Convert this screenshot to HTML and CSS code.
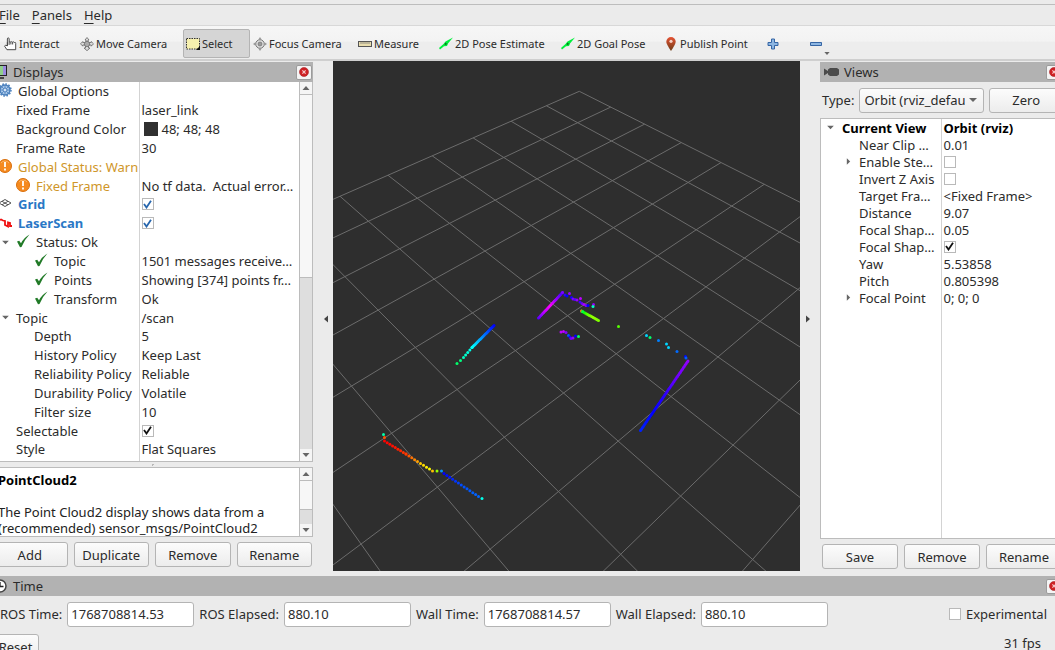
FILE: index.html
```html
<!DOCTYPE html>
<html lang="en">
<head>
<meta charset="utf-8">
<title>RViz</title>
<link rel="stylesheet" href="styles.css">
</head>
<body>
<svg class="defs" aria-hidden="true">
  <symbol id="check" viewBox="0 0 14 14"><path d="M1 7.500 3.200 6.800 5 9.300Q8 3.500 13.500.5 8.500 5.500 5.500 13L4 13.200Z" fill="#217a27"/></symbol>
  <symbol id="warn" viewBox="0 0 14 14"><circle cx="7" cy="7" r="6.500" fill="#f58a1f" stroke="#d96f0c"/><path d="M3 4a5 5 0 0 1 8 0" stroke="#fbb568" fill="none"/><path d="M7 3v5M7 9.500v2" stroke="#fff" stroke-width="1.800"/></symbol>
  <symbol id="close" viewBox="0 0 10 10"><circle cx="5" cy="5" r="4.500" fill="#cf2024" stroke="#a8282b" stroke-width=".6"/><path d="m3.400 3.400 3.200 3.200m0-3.200L3.400 6.600" stroke="#f6cccc" stroke-width="1.200"/></symbol>
  <symbol id="pose" viewBox="0 0 14 14"><path d="M0 11 4.500 7 6.500 4.500 14 .5 9 6.500 8 9 5 9.300 1 12.500Z" fill="#00f03c"/><path d="m6 5.500 2.500 1.500-2.800 1.200Z" fill="#09751f"/></symbol>
  <symbol id="down" viewBox="0 0 8 6"><path d="M.5 1h7L4 5Z" fill="#666"/></symbol>
</svg>

<div class="app">
  <nav class="menubar">
    <button type="button"><u>F</u>ile</button>
    <button type="button"><u>P</u>anels</button>
    <button type="button"><u>H</u>elp</button>
  </nav>

  <div class="toolbar" role="toolbar">
    <button type="button"><svg class="i14" viewBox="0 0 14 16"><path d="M4 10V2.200Q4 1 5 1t1 1.200V6Q7 4.500 8 6q1-1.500 2 0 1.500-1 2 .3 1.500-.6 1.500 1V14.500H3.500L.8 10.500q.3-2 3.200-.5V6M6 6v3M8 6v2.500M10 6v2.500" fill="#fff" stroke="#444" stroke-width="1.100"/></svg>Interact</button>
    <button type="button"><svg class="i14" viewBox="0 0 14 14"><path d="m7 .5 2 2.500H8v2.500h3.200v-1l2.300 2.300-2.300 2.400V8H8.500v3H10l-3 2.700L4 11h1.500V8H2.800v1.200L.5 6.800l2.300-2.300v1H6V3H5Z" fill="#ddd" stroke="#666" stroke-width=".8"/><circle cx="7" cy="7" r="2.700" fill="#aaa" stroke="#666" stroke-width=".7"/></svg>Move Camera</button>
    <button type="button" class="active" aria-pressed="true"><svg class="i14" viewBox="0 0 14 14"><rect x=".5" y="1.500" width="13" height="10.500" fill="#f6f0ae" stroke="#333" stroke-dasharray="1.500 1"/><path d="M14 9v4h-4Z" fill="#111"/></svg>Select</button>
    <button type="button"><svg class="i14" viewBox="0 0 14 14"><circle cx="7" cy="7" r="4.300" fill="#ddd" stroke="#777"/><circle cx="7" cy="7" r="2" fill="#999" stroke="#666" stroke-width=".6"/><path d="M7 0 5.300 2.500h3.400ZM7 14l1.700-2.500H5.300ZM0 7l2.500-1.700v3.400ZM14 7l-2.500-1.700v3.400Z" fill="#999"/></svg>Focus Camera</button>
    <button type="button"><svg class="i14" viewBox="0 0 14 14"><rect x=".5" y="4.500" width="13" height="5" fill="#e8dcae" stroke="#555"/><path d="M3 5v2M5 5v2M7 5v2M9 5v2M11 5v2" stroke="#777" stroke-width=".8"/></svg>Measure</button>
    <button type="button"><svg class="i14"><use href="#pose"/></svg>2D Pose Estimate</button>
    <button type="button"><svg class="i14"><use href="#pose"/></svg>2D Goal Pose</button>
    <button type="button"><svg class="pin" viewBox="0 0 10 14"><defs><linearGradient id="pg" x2="0" y2="1"><stop stop-color="#e65334"/><stop offset="1" stop-color="#6b3b17"/></linearGradient></defs><path d="M5 14Q.3 7 .3 4.700a4.700 4.700 0 0 1 9.400 0Q9.700 7 5 14Z" fill="url(#pg)"/><circle cx="5" cy="4.300" r="1.600" fill="#f5d0c5"/></svg>Publish Point</button>
    <button type="button" class="plain" aria-label="Add tool"><svg class="i12" viewBox="0 0 12 12"><path d="M4.500 1h3v3.500H11v3H7.500V11h-3V7.500H1v-3h3.500Z" fill="#8db6e2" stroke="#3565a4"/></svg></button>
    <button type="button" class="plain" aria-label="Remove tool"><svg class="i12" viewBox="0 0 12 12"><path d="M.5 4.500h11v3H.5Z" fill="#8db6e2" stroke="#3565a4"/></svg><svg class="menu-arrow" viewBox="0 0 8 6"><use href="#down"/></svg></button>
  </div>

  <main class="workspace">
    <section class="dock displays">
      <header class="title">
        <svg class="i14" viewBox="0 0 14 14"><rect x=".5" y=".5" width="13" height="10" fill="#8fd08c" stroke="#222"/><path d="M10 1h3v9h-3Z" fill="#9b8ae0"/><path d="M4 13h7" stroke="#222" stroke-width="1.500"/></svg>
        <h2>Displays</h2>
        <button type="button" class="close" aria-label="Close Displays"><svg><use href="#close"/></svg></button>
      </header>
      <div class="pane tree-pane">
        <div class="clip">
        <table class="tree props">
          <colgroup><col class="name-col"><col></colgroup>
          <tr><td class="l0"><svg class="i14" viewBox="0 0 14 14"><circle cx="7" cy="7" r="5" fill="#a9c8ea" stroke="#4b80bd" stroke-width="1.500"/><circle cx="7" cy="7" r="6" fill="none" stroke="#4b80bd" stroke-width="1.500" stroke-dasharray="1.600 1.500"/><path d="M7 2v10M2 7h10M3.500 3.500l7 7M10.500 3.500l-7 7" stroke="#4b80bd" stroke-width=".8"/><circle cx="7" cy="7" r="2" fill="#d5e5f6" stroke="#4b80bd"/></svg>Global Options</td><td></td></tr>
          <tr><td class="l1">Fixed Frame</td><td>laser_link</td></tr>
          <tr><td class="l1">Background Color</td><td><span class="swatch"></span>48; 48; 48</td></tr>
          <tr><td class="l1">Frame Rate</td><td>30</td></tr>
          <tr class="warning"><td class="l0"><svg class="i14"><use href="#warn"/></svg>Global Status: Warn</td><td></td></tr>
          <tr class="warning"><td class="l1"><svg class="i14"><use href="#warn"/></svg>Fixed Frame</td><td>No tf data.&nbsp; Actual error…</td></tr>
          <tr class="display"><td class="l0"><svg class="i14" viewBox="0 0 14 14"><path d="M1 7 7 3.500 13 7l-6 3.500ZM4 5.300l6 3.500M10 5.300 4 8.800" fill="none" stroke="#555"/></svg>Grid</td><td><input type="checkbox" class="blue" aria-label="Grid" checked></td></tr>
          <tr class="display"><td class="l0"><svg class="i14" viewBox="0 0 14 14"><path d="M0 5.500 3 4.500 5 5.500 7 6v4l3 1.500V7.500L12 8v3h2" fill="none" stroke="#f01010" stroke-width="1.800"/></svg>LaserScan</td><td><input type="checkbox" class="blue" aria-label="LaserScan" checked></td></tr>
          <tr><td class="l1 open"><svg class="i14"><use href="#check"/></svg>Status: Ok</td><td></td></tr>
          <tr><td class="l2"><svg class="i14"><use href="#check"/></svg>Topic</td><td>1501 messages receive…</td></tr>
          <tr><td class="l2"><svg class="i14"><use href="#check"/></svg>Points</td><td>Showing [374] points fr…</td></tr>
          <tr><td class="l2"><svg class="i14"><use href="#check"/></svg>Transform</td><td>Ok</td></tr>
          <tr><td class="l1 open">Topic</td><td>/scan</td></tr>
          <tr><td class="l2">Depth</td><td>5</td></tr>
          <tr><td class="l2">History Policy</td><td>Keep Last</td></tr>
          <tr><td class="l2">Reliability Policy</td><td>Reliable</td></tr>
          <tr><td class="l2">Durability Policy</td><td>Volatile</td></tr>
          <tr><td class="l2">Filter size</td><td>10</td></tr>
          <tr><td class="l1">Selectable</td><td><input type="checkbox" aria-label="Selectable" checked></td></tr>
          <tr><td class="l1">Style</td><td>Flat Squares</td></tr>
          <tr><td class="l1">Size (m)</td><td></td></tr>
        </table>
        </div>
        <div class="scrollbar"><svg><use href="#down"/></svg><i class="thumb long"></i><svg><use href="#down"/></svg></div>
      </div>
      <div class="splitter"></div>
      <div class="pane info-pane">
        <div class="clip info"><h3>PointCloud2</h3><p>The Point Cloud2 display shows data from a<br>(recommended) sensor_msgs/PointCloud2</p></div>
        <div class="scrollbar"><svg><use href="#down"/></svg><i class="thumb"></i><svg><use href="#down"/></svg></div>
      </div>
      <div class="buttons">
        <button type="button">Add</button><button type="button">Duplicate</button><button type="button">Remove</button><button type="button">Rename</button>
      </div>
    </section>

    <button type="button" class="collapse left" aria-label="Collapse left panel"><svg viewBox="0 0 6 8"><path d="M5 .5v7L1 4Z" fill="#444"/></svg></button>
    <svg class="scene" id="scene" viewBox="333 61 467 510" preserveAspectRatio="xMidYMid slice" role="img" aria-label="3D view"></svg>
    <button type="button" class="collapse right" aria-label="Collapse right panel"><svg viewBox="0 0 6 8"><path d="M1 .5v7L5 4Z" fill="#444"/></svg></button>

    <section class="dock views">
      <header class="title">
        <svg class="camera" viewBox="0 0 15 10"><path d="M0 1.500 4 4V2.500L6 1h7l2 1.500v5L13 9H6L4 7.500V6L0 8.500Z" fill="#4b4b4b"/></svg>
        <h2>Views</h2>
        <button type="button" class="close" aria-label="Close Views"><svg><use href="#close"/></svg></button>
      </header>
      <div class="type-row">
        <label for="type">Type:</label>
        <select id="type"><option>Orbit (rviz_default_plugins)</option></select>
        <button type="button">Zero</button>
      </div>
      <div class="pane view-pane">
        <table class="tree view-tree">
          <colgroup><col class="name-col"><col></colgroup>
          <tr class="strong"><td class="v0 open">Current View</td><td>Orbit (rviz)</td></tr>
          <tr><td class="v1">Near Clip …</td><td>0.01</td></tr>
          <tr><td class="v1 shut">Enable Ste…</td><td><input type="checkbox" aria-label="Enable Stereo Rendering"></td></tr>
          <tr><td class="v1">Invert Z Axis</td><td><input type="checkbox" aria-label="Invert Z Axis"></td></tr>
          <tr><td class="v1">Target Fra…</td><td>&lt;Fixed Frame&gt;</td></tr>
          <tr><td class="v1">Distance</td><td>9.07</td></tr>
          <tr><td class="v1">Focal Shap…</td><td>0.05</td></tr>
          <tr><td class="v1">Focal Shap…</td><td><input type="checkbox" aria-label="Focal Shape Fixed Size" checked></td></tr>
          <tr><td class="v1">Yaw</td><td>5.53858</td></tr>
          <tr><td class="v1">Pitch</td><td>0.805398</td></tr>
          <tr><td class="v1 shut">Focal Point</td><td>0; 0; 0</td></tr>
          <tr class="filler"><td></td><td></td></tr>
        </table>
      </div>
      <div class="buttons">
        <button type="button">Save</button><button type="button">Remove</button><button type="button">Rename</button>
      </div>
    </section>
  </main>

  <section class="time">
    <header class="title">
      <svg class="i14" viewBox="0 0 14 14"><circle cx="7" cy="7" r="6" fill="#fff" stroke="#444" stroke-width="1.500"/><path d="M7 3v4.500h3.500" fill="none" stroke="#222" stroke-width="1.300"/></svg>
      <h2>Time</h2>
      <button type="button" class="close" aria-label="Close Time"><svg><use href="#close"/></svg></button>
    </header>
    <div class="time-row">
      <label for="rt">ROS Time:</label><input type="text" id="rt" value="1768708814.53">
      <label for="re">ROS Elapsed:</label><input type="text" id="re" value="880.10">
      <label for="wt">Wall Time:</label><input type="text" id="wt" value="1768708814.57">
      <label for="we">Wall Elapsed:</label><input type="text" id="we" value="880.10">
      <label class="experimental"><input type="checkbox">Experimental</label>
    </div>
    <div class="status-row"><button type="button">Reset</button><span>31 fps</span></div>
  </section>
</div>
<script src="scene.js"></script>
</body>
</html>
```

FILE: styles.css
```css
* { box-sizing: border-box; }

body {
  margin: 0;
  height: 100vh;
  overflow: hidden;
  background: #ebebeb;
  color: #2b2b2b;
  font: 13px/16px "Noto Sans", sans-serif;
}

button, input, select { font: inherit; color: inherit; }
button { margin: 0; padding: 0; border: 0; background: none; }
h2, h3, p { margin: 0; font-size: 13px; font-weight: 400; }
svg { display: block; flex: none; }
.defs { position: absolute; width: 0; height: 0; }
.i14 { width: 14px; height: 14px; }
.i12 { width: 12px; height: 12px; }

/* The window reaches slightly past both screen edges */
.app {
  display: flex;
  flex-direction: column;
  height: 100%;
  margin: 0 -8px;
}

.menubar {
  display: flex;
  flex: none;
  gap: 12px;
  height: 26px;
  padding: 5px 7px 0;
  border-bottom: 1px solid #d8d8d8;
  background: linear-gradient(#ebebeb 4px, #bdbdbd 4px, #bdbdbd 5px, #ebebeb 5px);
}
.menubar u { text-underline-offset: 3px; }

.toolbar {
  display: grid;
  flex: none;
  grid-template-columns: 77px 105px 68px 105px 81px 122px 104px 98px 43px 30px;
  height: 35px;
  padding: 3px 9px 1px;
  border-bottom: 2px solid #cfcfcf;
  background: linear-gradient(#f6f6f6, #f3f3f3 45%, #ededed 50%);
  font-size: 11px;
}
.toolbar button { display: flex; align-items: center; gap: 2px; padding: 0 2px; white-space: nowrap; }
.toolbar .active { margin-right: 1px; border: 1px solid #b4b4b4; border-radius: 2px; background: #d5d5d5; }
.toolbar .pin { width: 10px; height: 14px; margin: 0 2px 0 1px; }
.toolbar .plain { padding-left: 6px; }
.menu-arrow { align-self: flex-end; width: 6px; height: 5px; margin-bottom: 2px; }

.workspace { display: flex; flex: 1; min-height: 0; }

.dock { display: flex; flex-direction: column; flex: none; padding: 1px 0 9px; }
.displays { width: 321px; }
.views { width: 243px; padding-bottom: 7px; }

.title { display: flex; flex: none; align-items: center; height: 20px; padding: 0 1px 0 1px; gap: 6px; background: #b2b2b2; }
.title h2 { flex: 1; }
.views .title { padding-left: 4px; gap: 5px; }
.camera { width: 15px; height: 10px; }
.close {
  display: grid;
  place-items: center;
  width: 16px;
  height: 15px;
  border: 1px solid #9c9c9c;
  border-radius: 2px;
  background: #f4f4f4;
}
.close svg { width: 10px; height: 10px; }

.pane { display: flex; min-height: 0; border: 1px solid #bcbcbc; background: #fff; }
.tree-pane { flex: 1; border-top: 0; }
.clip { flex: 1; overflow: hidden; }
.splitter { flex: none; height: 5px; background: radial-gradient(circle, #b8b8b8 1px, transparent 1px) center / 3px 3px no-repeat; }
.info-pane { flex: none; height: 70px; }
.info { padding: 4px 5px; white-space: nowrap; color: #222; }
.info h3 { margin-bottom: 16px; font-weight: 700; color: #000; }

.scrollbar { display: flex; flex: none; flex-direction: column; width: 13px; border-left: 1px solid #bcbcbc; background: #dedede; }
.scrollbar svg { width: 12px; height: 12px; padding: 3px 2px; background: #f5f5f5; }
.scrollbar svg:first-child { transform: rotate(180deg); }
.scrollbar .thumb { height: 30px; margin-bottom: auto; border: solid #bcbcbc; border-width: 1px 0; background: #f7f7f7; }
.scrollbar .long { height: 184px; }

.tree { width: 100%; border-collapse: collapse; table-layout: fixed; }
.tree td { padding: 0 0 0 2px; line-height: 16px; white-space: nowrap; overflow: hidden; vertical-align: middle; }
.tree td:first-child { border-right: 1px solid #d3d3d3; }
.props { height: 396px; }
.props .name-col { width: 146px; }
.tree .i14 { display: inline-block; margin-right: 6px; vertical-align: -1px; }
.tree .l0 { padding-left: 5px; }
.tree .l1 { padding-left: 23px; }
.tree .l2 { padding-left: 41px; }
.tree .open { background: no-repeat 9px center / 7px 5px url("data:image/svg+xml,%3Csvg xmlns='http://www.w3.org/2000/svg' viewBox='0 0 8 6'%3E%3Cpath d='M0 1h8L4 5Z' fill='%23666'/%3E%3C/svg%3E"); }
.tree .shut { background: no-repeat 25px center / 5px 7px url("data:image/svg+xml,%3Csvg xmlns='http://www.w3.org/2000/svg' viewBox='0 0 6 8'%3E%3Cpath d='M1 0v8L5 4Z' fill='%23666'/%3E%3C/svg%3E"); }
.warning td:first-child { color: #cf962a; }
.display td:first-child { color: #2a78c6; font-weight: 700; }
.swatch { display: inline-block; width: 14px; height: 14px; margin: 0 4px 0 2px; background: #303030; vertical-align: -2px; }

input[type="checkbox"] {
  appearance: none;
  display: block;
  width: 12px;
  height: 12px;
  margin: 0;
  border: 1px solid #b9b9b9;
  background: #fff center / 9px 9px no-repeat;
}
input[type="checkbox"]:checked { background-image: url("data:image/svg+xml,%3Csvg xmlns='http://www.w3.org/2000/svg' viewBox='0 0 9 9'%3E%3Cpath d='m1 4 2.500 3.500L8 .8' fill='none' stroke='%23111' stroke-width='1.800'/%3E%3C/svg%3E"); }
input.blue:checked { background-image: url("data:image/svg+xml,%3Csvg xmlns='http://www.w3.org/2000/svg' viewBox='0 0 9 9'%3E%3Cpath d='m1 4 2.500 3.500L8 .8' fill='none' stroke='%232766ad' stroke-width='1.800'/%3E%3C/svg%3E"); }

.buttons { display: grid; flex: none; grid-auto-flow: column; grid-auto-columns: 1fr; gap: 6px; margin-top: 5px; padding: 0 1px 0 0; }
.views .buttons { padding-left: 2px; }
.buttons button, .type-row button, .status-row button {
  height: 25px;
  border: 1px solid #b4b4b4;
  border-radius: 3px;
  background: linear-gradient(#fcfcfc, #ececec);
}

.collapse { display: grid; flex: none; place-items: center; width: 20px; }
.collapse svg { width: 6px; height: 8px; }
.collapse.left { padding-left: 5px; }
.collapse.right { padding-right: 4px; }
.scene { flex: 1; min-width: 0; height: calc(100% - 5px); background: #2e2e2e; }

.type-row { display: grid; flex: none; grid-template-columns: auto 125px 1fr; align-items: center; gap: 5px; height: 36px; padding: 0 0 0 2px; }
.type-row select {
  appearance: none;
  width: 125px;
  height: 25px;
  padding: 0 18px 0 4px;
  border: 1px solid #b4b4b4;
  border-radius: 3px;
  background:
    no-repeat right 6px center / 8px 6px url("data:image/svg+xml,%3Csvg xmlns='http://www.w3.org/2000/svg' viewBox='0 0 8 6'%3E%3Cpath d='M0 1h8L4 5Z' fill='%23666'/%3E%3C/svg%3E"),
    linear-gradient(#fcfcfc, #ececec);
  text-overflow: clip;
}

.view-pane { flex: 1; }
.view-tree { height: 100%; }
.view-tree .name-col { width: 120px; }
.view-tree tr { height: 17px; }
.view-tree .filler { height: auto; }
.view-tree .v0 { padding-left: 21px; background-position: 6px center; }
.view-tree .v1 { padding-left: 38px; }
.strong { color: #000; font-weight: 700; }

.time { flex: none; height: 74px; }
.time-row { display: flex; align-items: center; height: 36px; padding: 0 16px 0 8px; gap: 5px; white-space: nowrap; }
.time-row input[type="text"] { width: 127px; height: 25px; padding: 0 3px; border: 1px solid #b4b4b4; border-radius: 3px; background: #fff; }
.experimental { display: flex; align-items: center; gap: 5px; margin-left: auto; }
.status-row { display: flex; justify-content: space-between; padding: 2px 22px 0 0; }
.status-row button { width: 47px; }
.status-row span { line-height: 18px; }
```

FILE: scene.js
```js
const scene = document.getElementById("scene");

function add(name, attributes) {
  const node = document.createElementNS("http://www.w3.org/2000/svg", name);
  for (const key in attributes) node.setAttribute(key, attributes[key]);
  scene.append(node);
}

// Perspective projection of ground cell corner (i, j)
function project(i, j) {
  const w = 1 - 0.0337 * i - 0.03624 * j;
  return [(579.3 - 51.34 * i + 9.3 * j) / w, (91.3 + 10.88 * i + 11.92 * j) / w];
}

function segment(a, b) {
  add("line", { x1: a[0], y1: a[1], x2: b[0], y2: b[1], stroke: "#6c6c6c", "stroke-width": 1 });
}

for (let k = 0; k <= 10; k++) {
  segment(project(k, 0), project(k, 10));
  segment(project(0, k), project(10, k));
}

function point(x, y, color) {
  add("circle", { cx: x, cy: y, r: 1.5, fill: color });
}

// Row of points between two ends, coloured through a list of hues
function sweep(x1, y1, x2, y2, count, hues) {
  for (let n = 0; n < count; n++) {
    const t = n / (count - 1);
    const p = t * (hues.length - 1);
    const k = Math.min(Math.floor(p), hues.length - 2);
    const hue = hues[k] + (hues[k + 1] - hues[k]) * (p - k);
    point(x1 + (x2 - x1) * t, y1 + (y2 - y1) * t, `hsl(${hue} 100% 50%)`);
  }
}

sweep(538.5, 318, 562.5, 292.5, 24, [262, 285, 300, 275, 255]);
sweep(581.5, 311, 598.5, 320.5, 14, [140, 100, 85, 90]);
sweep(494, 325.5, 472, 347.5, 24, [240, 220, 200, 180]);
sweep(472, 347.5, 463.5, 357.5, 5, [178, 165]);
sweep(688, 361, 640.5, 430.5, 52, [275, 265, 250, 240, 232]);
sweep(384.5, 441, 406, 454, 9, [0, 5, 14]);
sweep(406, 454, 417.5, 461.5, 5, [14, 38]);
sweep(420.5, 463.5, 429.5, 469, 4, [48, 60]);
sweep(444, 473.5, 478.5, 496.5, 13, [240, 222, 216]);

[
  [562.5, 292.5, 270], [565, 295, 250], [567, 296, 240], [569.5, 293.5, 275],
  [571.5, 297.5, 245], [573, 299, 270], [575, 299.5, 260], [577, 300, 275], [580.5, 298.5, 285],
  [580, 302, 255], [582, 303.5, 265], [584, 304.5, 280], [586, 305.5, 270], [588, 305.5, 240],
  [593.5, 304.5, 275], [593, 306.5, 165], [581.5, 311, 25], [582.5, 311.5, 135],
  [561, 332, 285], [563.5, 331.5, 285], [566, 332.5, 270], [568.5, 335.5, 220], [570, 337, 245],
  [571, 338.5, 265], [573, 338, 275], [575.5, 336, 240], [578.5, 336.5, 145],
  [618.5, 326.5, 100], [646.5, 335.5, 190], [650, 337.5, 145], [658.5, 340.5, 210],
  [666.5, 344, 190], [668.5, 347.5, 190], [677, 351.5, 215], [685.5, 356.5, 238], [686, 358, 218],
  [460.5, 360.5, 150], [457, 363.5, 145],
  [383.5, 434.5, 160], [384.5, 437.5, 20],
  [432.5, 471, 45], [437, 471, 85], [441.5, 471, 205], [482, 498.5, 175]
].forEach(([x, y, hue]) => point(x, y, `hsl(${hue} 100% 50%)`));
```
